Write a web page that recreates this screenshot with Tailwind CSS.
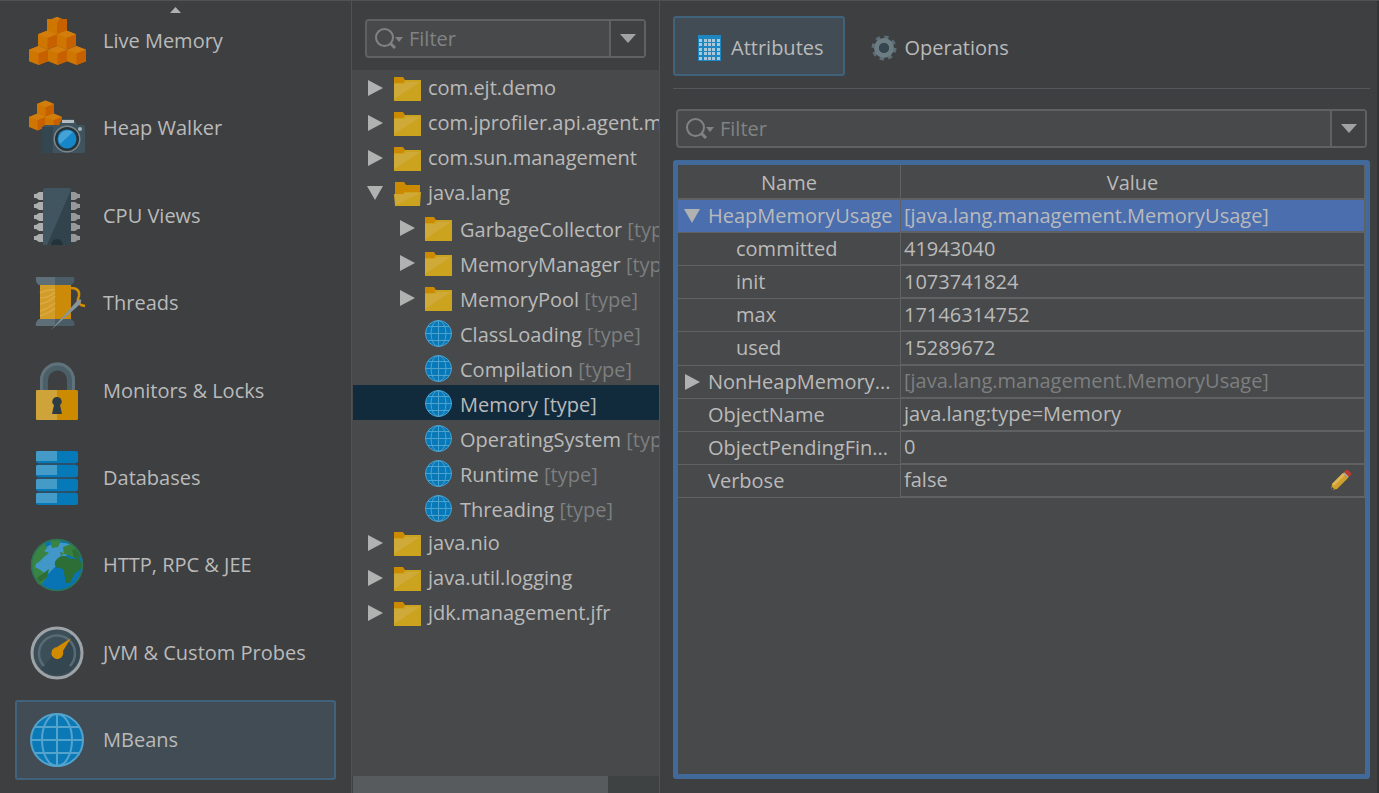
<!DOCTYPE html>
<html lang="en">
<head>
<meta charset="utf-8">
<title>MBeans</title>
<script src="https://cdn.jsdelivr.net/npm/@tailwindcss/browser@4"></script>
</head>
<body class="bg-[#3d3f41] text-[#bababa] font-['Open_Sans','Noto_Sans',sans-serif] text-xl leading-7">

<svg class="hidden" aria-hidden="true">
  <defs>
    <symbol id="cube" viewBox="0 0 20 20">
      <path fill="#cf7600" d="M10 0 20 4v12l-10 4L0 16V4z"/>
      <path fill="#d27d0c" d="M10 0 20 4 10 8 0 4z"/>
      <path fill="#c76100" d="M10 8 20 4v12l-10 4z"/>
    </symbol>
    <symbol id="folder" viewBox="0 0 27 24">
      <path fill="#cc8a00" d="M0 0h9l2 3v4H0z"/>
      <path fill="#cca31f" d="M0 6h9l2-3h16v21H0z"/>
      <path fill="#d0ad45" opacity=".7" d="M0 7h10l2-2h14L0 22z"/>
    </symbol>
    <symbol id="folder-open" viewBox="0 0 27 24">
      <path fill="#cc8a00" d="M1 0h9l2 3h14v11H1z"/>
      <path fill="#cca31f" d="M0 12h9l2-2h16l-1 14H1z"/>
      <path fill="#d0ad45" opacity=".7" d="M0 12h9l2-1h15L2 23z"/>
    </symbol>
    <symbol id="globe" viewBox="0 0 54 54">
      <circle cx="27" cy="27" r="26" fill="#0c79b7"/>
      <g fill="none" stroke="#53a3cd" stroke-width="2"><circle cx="27" cy="27" r="26"/><ellipse cx="27" cy="27" rx="15" ry="26"/><path d="M27 1v52M1 27h52M5 14h44M5 40h44"/></g>
    </symbol>
    <symbol id="globe-small" viewBox="0 0 27 27">
      <circle cx="13.500" cy="13.500" r="13" fill="#0779b9"/>
      <g fill="none" stroke="#4ba2cf" stroke-width="1"><circle cx="13.500" cy="13.500" r="13"/><ellipse cx="13.500" cy="13.500" rx="7.500" ry="13"/><path d="M13.500 0v27M0 13.500h27M3 6.500h21M3 20.500h21"/></g>
    </symbol>
    <symbol id="search" viewBox="0 0 28 22">
      <circle cx="9.500" cy="9.500" r="8.500" fill="none" stroke="#808384" stroke-width="2"/>
      <path stroke="#808384" stroke-width="3" d="m15 15 5 5"/>
      <path fill="#808384" d="M20 9h8l-4 5z"/>
    </symbol>
    <symbol id="right" viewBox="0 0 15 16"><path fill="#b0b1b1" d="M0 0v16l15-8z"/></symbol>
    <symbol id="down" viewBox="0 0 16 14"><path fill="#b0b1b1" d="M0 0h16L8 14z"/></symbol>
  </defs>
</svg>

<div class="flex h-screen overflow-hidden border-t border-[#505254]">

  <nav aria-label="Views" class="relative flex w-[352px] shrink-0 flex-col justify-between border-r border-[#505254] px-[15px] pb-[13px]">
    <button aria-label="Scroll up" class="absolute top-1.5 left-[170px] h-[6px] w-[11px]"><svg class="block h-full w-full" viewBox="0 0 11 6"><path fill="#b0b1b1" d="M0 6h11L5.500 0z"/></svg></button>

    <a href="#" class="flex h-20 items-center gap-4 px-[14px]">
      <svg class="h-14 w-[58px]" viewBox="0 0 58 56">
        <use href="#cube" x="18" y="4" width="20" height="20"/>
        <path fill="#cf7600" d="M18 6h10v9H18z"/><path fill="#c76100" d="m28 10 2-4h8v9H28z"/>
        <use href="#cube" x="9" y="17" width="19" height="20"/><use href="#cube" x="28" y="17" width="19" height="20"/>
        <use href="#cube" x="0" y="33" width="19" height="19"/><use href="#cube" x="19" y="33" width="19" height="19"/><use href="#cube" x="38" y="33" width="19" height="19"/>
      </svg>
      <span>Live Memory</span>
    </a>
    <a href="#" class="flex h-20 items-center gap-4 px-[14px]">
      <svg class="h-14 w-[58px]" viewBox="0 0 58 56">
        <use href="#cube" x="8" y="0" width="17" height="18"/><use href="#cube" x="0" y="13" width="17" height="18"/><use href="#cube" x="16" y="13" width="17" height="18"/>
        <path fill="#3e535e" d="M16 25h14l3-6h12l3 6h6q2 0 2 2v24q0 2-2 2H15q-2 0-2-2V27z"/>
        <path fill="#344751" d="M13 27h11v26H13z"/>
        <path fill="#b5bdc0" d="M33 20h12v3H33z"/><circle cx="51" cy="29" r="2" fill="#a9b2b5"/>
        <circle cx="38" cy="39" r="13.500" fill="#7c878c"/><circle cx="38" cy="39" r="12" fill="#27333a"/><circle cx="38" cy="39" r="9.500" fill="#1586c8"/><path fill="#45a2d6" d="M31 44a9 9 0 0 1 13-12z"/>
      </svg>
      <span>Heap Walker</span>
    </a>
    <a href="#" class="flex h-20 items-center gap-4 px-[14px]">
      <svg class="h-[58px] w-[58px]" viewBox="0 0 58 58">
        <g fill="#acafb0"><path id="pins" d="M14 5h-4l-3 2H5v4h2l3 2h4zM14 15h-4l-3 2H5v4h2l3 2h4zM14 26h-4l-3 2H5v4h2l3 2h4zM14 36h-4l-3 2H5v4h2l3 2h4zM14 47h-4l-3 2H5v4h2l3 2h4z"/><use href="#pins" transform="matrix(-1 0 0 1 56 0)" opacity=".8"/></g>
        <rect x="14" y="1" width="28" height="57" rx="2" fill="#31434d"/><path fill="#40555f" d="M16 1h24q2 0 2 2L18 58h-4V3q0-2 2-2z"/>
        <path fill="#24323a" d="M22 58a6 6 0 0 1 12 0z"/>
      </svg>
      <span>CPU Views</span>
    </a>
    <a href="#" class="flex h-20 items-center gap-4 px-[14px]">
      <svg class="h-[56px] w-[58px]" viewBox="0 0 58 56">
        <path fill="#4a5c65" d="M7 2h38q2 5-3 8H10Q6 7 7 2zM10 44h32q5 3 3 7H7q-1-4 3-7z"/>
        <path fill="#5f6f77" d="M7 2h19v8H10Q6 7 7 2zM10 44h16v7H7q-1-4 3-7z"/>
        <path fill="#cb8a08" d="M11 10h31v34H11z"/><path fill="#d29c28" d="M11 10h15v34H11z"/>
        <path fill="none" stroke="#dda943" stroke-width="1.500" d="M11 18q8-4 15-3M11 23q9 0 15-6M11 29q10-2 15-8M11 36q9-3 15-8M11 41q9-3 15-8"/>
        <path fill="none" stroke="#d18e00" stroke-width="2.500" d="M42 13q9 0 8 8-3 6 2 9l4 1"/>
        <path fill="#87959b" d="m22 55 25-28q4-4 5-2 1 2-3 6z"/>
      </svg>
      <span>Threads</span>
    </a>
    <a href="#" class="flex h-20 items-center gap-4 px-[14px]">
      <svg class="h-[58px] w-[58px]" viewBox="0 0 58 58">
        <path fill="none" stroke="#4b5f69" stroke-width="8" d="M15 29V18a13.500 13.500 0 0 1 27 0v11"/><path fill="none" stroke="#61727a" stroke-width="3" d="M12.500 29V18a16 16 0 0 1 32 0v11"/>
        <rect x="7" y="28" width="42" height="30" rx="1.500" fill="#cb8a00"/><path fill="#cda33a" d="M8 28h20v30H8l-1-1V29z"/>
        <path fill="#2d3c44" d="M28 35a4.500 4.500 0 0 1 3 8l2 9H23l2-9a4.500 4.500 0 0 1 3-8z"/>
      </svg>
      <span>Monitors &amp; Locks</span>
    </a>
    <a href="#" class="flex h-20 items-center gap-4 px-[14px]">
      <svg class="h-[54px] w-[58px]" viewBox="0 0 58 54">
        <path fill="#29516a" d="M9 10h38v36H9z"/>
        <g fill="#067ab9"><rect x="7" y="0" width="42" height="12" rx="2"/><rect x="7" y="14" width="42" height="12" rx="2"/><rect x="7" y="28" width="42" height="12" rx="2"/><rect x="7" y="42" width="42" height="12" rx="2"/></g>
        <path fill="#459bc7" d="M8 0h20v10H7V1zM8 14h20v10H7v-9zM8 28h20v10H7v-9zM8 42h20v10H7v-9z"/>
      </svg>
      <span>Databases</span>
    </a>
    <a href="#" class="flex h-20 items-center gap-4 px-[14px]">
      <svg class="h-[54px] w-[58px]" viewBox="0 0 58 54">
        <circle cx="28" cy="27" r="26" fill="#0874b3"/><path fill="#4198c8" d="M10 45A26 26 0 0 1 46 9z"/>
        <path fill="#398344" d="M3 20Q7 9 16 5l2 5-3 3 5 2-5 4-4 4-4 3-1 3 7 4 5 6-6 8-3-1Q3 37 3 28zM21 2q8-2 11 1l-3 6-6 1z"/>
        <path fill="#39803f" d="m34 9 8-3q7 5 9 12l-5 2-7-3-4-1zM31 14l4 1-3 3z"/>
        <path fill="#2d6d36" d="M28 21q4-4 8-3l6 3 8-1q4 8 1 12l-5 3-5 10h-4l-2-10-1-4-7-2q-3-4 1-8z"/>
        <path fill="#2d6d36" d="m43 12 4-1 5 8-7 1zM20 31l-2 8-7 5-3-4z"/>
        <circle cx="28" cy="27" r="25.500" fill="none" stroke="#2d7450" stroke-width="1.500"/>
      </svg>
      <span>HTTP, RPC &amp; JEE</span>
    </a>
    <a href="#" class="flex h-20 items-center gap-4 px-[14px]">
      <svg class="h-[54px] w-[58px]" viewBox="0 0 58 54">
        <circle cx="28" cy="27" r="25" fill="#3c4f59" stroke="#9da3a6" stroke-width="3"/><path fill="#344650" d="M12 43 43 9a23 23 0 0 1-31 34z"/>
        <path fill="none" stroke="#586a73" stroke-width="2.500" d="M15 40a18 18 0 1 1 26 0"/>
        <path fill="#d18b00" d="m42 12-8 13a6 6 0 1 1-6-4z"/>
      </svg>
      <span>JVM &amp; Custom Probes</span>
    </a>
    <a href="#" aria-current="page" class="flex h-20 items-center gap-4 rounded-[3px] border-2 border-[#41627b] bg-[#414c54] px-3">
      <svg class="h-[54px] w-[58px]" viewBox="0 0 58 54"><use href="#globe" x="1" width="54" height="54"/></svg>
      <span>MBeans</span>
    </a>
  </nav>

  <section aria-label="MBean tree" class="flex w-[308px] shrink-0 flex-col border-r border-[#505254]">
    <div class="px-[13px] pt-[18px] pb-3">
      <div class="flex h-[39px] rounded border-2 border-[#5f6162] bg-[#48494a]">
        <label for="tree-filter" class="flex items-center pl-2"><svg class="h-[22px] w-7"><use href="#search"/></svg><span class="sr-only">Filter tree</span></label>
        <input id="tree-filter" type="text" placeholder="Filter" class="min-w-0 flex-1 bg-transparent px-[6px] outline-none placeholder:text-[#808384]">
        <button aria-label="Filter history" class="flex w-[35px] items-center justify-center border-l-2 border-[#5f6162] bg-[#3f4143]"><svg class="h-[9px] w-4" viewBox="0 0 16 9"><path fill="#a0a2a3" d="M0 0h16L8 9z"/></svg></button>
      </div>
    </div>
    <ul role="tree" class="flex-1 overflow-hidden bg-[#48494a] pl-px whitespace-nowrap">
      <li role="treeitem" class="flex h-[35px] items-center pl-[15px]"><svg class="mr-[11px] h-4 w-[15px] shrink-0"><use href="#right"/></svg><svg class="mt-0.5 mr-[7px] h-6 w-[27px] shrink-0"><use href="#folder"/></svg><span>com.ejt.demo</span></li>
      <li role="treeitem" class="flex h-[35px] items-center pl-[15px]"><svg class="mr-[11px] h-4 w-[15px] shrink-0"><use href="#right"/></svg><svg class="mt-0.5 mr-[7px] h-6 w-[27px] shrink-0"><use href="#folder"/></svg><span>com.jprofiler.api.agent.m</span></li>
      <li role="treeitem" class="flex h-[35px] items-center pl-[15px]"><svg class="mr-[11px] h-4 w-[15px] shrink-0"><use href="#right"/></svg><svg class="mt-0.5 mr-[7px] h-6 w-[27px] shrink-0"><use href="#folder"/></svg><span>com.sun.management</span></li>
      <li role="treeitem" aria-expanded="true">
        <div class="flex h-[35px] items-center pl-[14px]"><svg class="mr-[11px] h-[14px] w-4 shrink-0"><use href="#down"/></svg><svg class="mt-0.5 mr-[7px] h-6 w-[27px] shrink-0"><use href="#folder-open"/></svg><span>java.lang</span></div>
        <ul role="group">
          <li role="treeitem" class="flex h-[35px] items-center pl-[47px]"><svg class="mr-[10px] h-4 w-[15px] shrink-0"><use href="#right"/></svg><svg class="mt-0.5 mr-2 h-6 w-[27px] shrink-0"><use href="#folder"/></svg><span class="pt-1">GarbageCollector <span class="text-[#7d7f80]">[type]</span></span></li>
          <li role="treeitem" class="flex h-[35px] items-center pl-[47px]"><svg class="mr-[10px] h-4 w-[15px] shrink-0"><use href="#right"/></svg><svg class="mt-0.5 mr-2 h-6 w-[27px] shrink-0"><use href="#folder"/></svg><span class="pt-1">MemoryManager <span class="text-[#7d7f80]">[type]</span></span></li>
          <li role="treeitem" class="flex h-[35px] items-center pl-[47px]"><svg class="mr-[10px] h-4 w-[15px] shrink-0"><use href="#right"/></svg><svg class="mt-0.5 mr-2 h-6 w-[27px] shrink-0"><use href="#folder"/></svg><span class="pt-1">MemoryPool <span class="text-[#7d7f80]">[type]</span></span></li>
          <li role="treeitem" class="flex h-[35px] items-center pl-[72px]"><svg class="mt-0.5 mr-2 h-[27px] w-[27px] shrink-0"><use href="#globe-small"/></svg><span class="pt-1">ClassLoading <span class="text-[#7d7f80]">[type]</span></span></li>
          <li role="treeitem" class="flex h-[35px] items-center pl-[72px]"><svg class="mt-0.5 mr-2 h-[27px] w-[27px] shrink-0"><use href="#globe-small"/></svg><span class="pt-1">Compilation <span class="text-[#7d7f80]">[type]</span></span></li>
          <li role="treeitem" aria-selected="true" class="flex h-[35px] items-center bg-[#112a3c] pl-[72px]"><svg class="mt-0.5 mr-2 h-[27px] w-[27px] shrink-0"><use href="#globe-small"/></svg><span class="pt-1">Memory [type]</span></li>
          <li role="treeitem" class="flex h-[35px] items-center pl-[72px]"><svg class="mt-0.5 mr-2 h-[27px] w-[27px] shrink-0"><use href="#globe-small"/></svg><span class="pt-1">OperatingSystem <span class="text-[#7d7f80]">[type]</span></span></li>
          <li role="treeitem" class="flex h-[35px] items-center pl-[72px]"><svg class="mt-0.5 mr-2 h-[27px] w-[27px] shrink-0"><use href="#globe-small"/></svg><span class="pt-1">Runtime <span class="text-[#7d7f80]">[type]</span></span></li>
          <li role="treeitem" class="flex h-[35px] items-center pl-[72px]"><svg class="mt-0.5 mr-2 h-[27px] w-[27px] shrink-0"><use href="#globe-small"/></svg><span class="pt-1">Threading <span class="text-[#7d7f80]">[type]</span></span></li>
        </ul>
      </li>
      <li role="treeitem" class="flex h-[35px] items-center pl-[15px]"><svg class="mr-[11px] h-4 w-[15px] shrink-0"><use href="#right"/></svg><svg class="mt-0.5 mr-[7px] h-6 w-[27px] shrink-0"><use href="#folder"/></svg><span>java.nio</span></li>
      <li role="treeitem" class="flex h-[35px] items-center pl-[15px]"><svg class="mr-[11px] h-4 w-[15px] shrink-0"><use href="#right"/></svg><svg class="mt-0.5 mr-[7px] h-6 w-[27px] shrink-0"><use href="#folder"/></svg><span>java.util.logging</span></li>
      <li role="treeitem" class="flex h-[35px] items-center pl-[15px]"><svg class="mr-[11px] h-4 w-[15px] shrink-0"><use href="#right"/></svg><svg class="mt-0.5 mr-[7px] h-6 w-[27px] shrink-0"><use href="#folder"/></svg><span>jdk.management.jfr</span></li>
    </ul>
    <div class="h-[17px] bg-[#3e4242] pl-px"><div class="h-full w-5/6 bg-[#575b5d]"></div></div>
  </section>

  <main class="flex min-w-0 flex-1 flex-col border-r-2 border-[#323435] pr-[7px] pb-[14px] pl-[13px]">
    <div role="tablist" class="flex border-b border-[#55585a] pt-[15px] pb-3">
      <button role="tab" aria-selected="true" class="flex h-[60px] items-center rounded-[3px] border-2 border-[#41627b] bg-[#414c54] pt-[3px] pr-[19px] pl-[23px]">
        <svg class="mr-[10px] h-[26px] w-[23px]" viewBox="0 0 23 26"><path fill="#1e86c1" d="M0 0h23v26H0z"/><g fill="#a9c9db"><path id="cells" d="M1 4h3v3H1zM6 4h3v3H6zM10 4h3v3h-3zM14 4h3v3h-3zM19 4h3v3h-3zM1 8h3v3H1zM6 8h3v3H6zM10 8h3v3h-3zM14 8h3v3h-3zM19 8h3v3h-3z"/><use href="#cells" y="9"/><path d="M1 22h3v3H1zM6 22h3v3H6zM10 22h3v3h-3zM14 22h3v3h-3zM19 22h3v3h-3z"/></g></svg>
        <span>Attributes</span>
      </button>
      <button role="tab" class="flex h-[60px] items-center pt-[3px] pl-[26px]">
        <svg class="mr-2 h-[26px] w-[26px]" viewBox="0 0 26 26"><circle cx="13" cy="13" r="11" fill="none" stroke="#5e6e76" stroke-width="3" stroke-dasharray="4.300 4.340"/><circle cx="13" cy="13" r="7.500" fill="none" stroke="#6c7c83" stroke-width="5"/><circle cx="13" cy="13" r="5" fill="#354650"/></svg>
        <span>Operations</span>
      </button>
    </div>
    <div class="pt-5 pr-[3px] pb-3 pl-[3px]">
      <div class="flex h-[39px] rounded border-2 border-[#5f6162] bg-[#48494a]">
        <label for="attribute-filter" class="flex items-center pl-2"><svg class="h-[22px] w-7"><use href="#search"/></svg><span class="sr-only">Filter attributes</span></label>
        <input id="attribute-filter" type="text" placeholder="Filter" class="min-w-0 flex-1 bg-transparent px-[6px] outline-none placeholder:text-[#808384]">
        <button aria-label="Filter history" class="flex w-[35px] items-center justify-center border-l-2 border-[#5f6162] bg-[#3f4143]"><svg class="h-[9px] w-4" viewBox="0 0 16 9"><path fill="#a0a2a3" d="M0 0h16L8 9z"/></svg></button>
      </div>
    </div>
    <div class="flex-1 rounded-[3px] border-[5px] border-[#41699a] bg-[#48494a]">
      <table class="h-[333px] w-full table-fixed border-separate border-spacing-0 whitespace-nowrap">
        <colgroup><col class="w-[223px]"><col></colgroup>
        <thead>
          <tr class="h-[35px]"><th class="border-r border-b-2 border-[#5f6162] p-0 pt-0.5 font-normal">Name</th><th class="border-r border-b-2 border-[#5f6162] p-0 pt-0.5 font-normal">Value</th></tr>
        </thead>
        <tbody>
          <tr class="bg-[#4b6eaf]"><td class="border-r border-b border-[#5f6162] p-0 pl-[6px]"><span class="flex items-center gap-2"><svg class="h-[14px] w-4 shrink-0"><use href="#down"/></svg>HeapMemoryUsage</span></td><td class="border-r border-b-2 border-[#5f6162] p-0 pl-[3px]">[java.lang.management.MemoryUsage]</td></tr>
          <tr><td class="border-r border-b border-[#5f6162] p-0 pl-[58px]">committed</td><td class="border-r border-b-2 border-[#5f6162] p-0 pl-[3px]">41943040</td></tr>
          <tr><td class="border-r border-b border-[#5f6162] p-0 pl-[58px]">init</td><td class="border-r border-b-2 border-[#5f6162] p-0 pl-[3px]">1073741824</td></tr>
          <tr><td class="border-r border-b border-[#5f6162] p-0 pl-[58px]">max</td><td class="border-r border-b-2 border-[#5f6162] p-0 pl-[3px]">17146314752</td></tr>
          <tr><td class="border-r border-b border-[#5f6162] p-0 pl-[58px]">used</td><td class="border-r border-b-2 border-[#5f6162] p-0 pl-[3px]">15289672</td></tr>
          <tr><td class="border-r border-b border-[#5f6162] p-0 pl-[7px]"><span class="flex items-center gap-2"><svg class="h-4 w-[15px] shrink-0"><use href="#right"/></svg>NonHeapMemory...</span></td><td class="border-r border-b-2 border-[#5f6162] p-0 pl-[3px] text-[#7d7f80]">[java.lang.management.MemoryUsage]</td></tr>
          <tr><td class="border-r border-b border-[#5f6162] p-0 pl-[30px]">ObjectName</td><td class="border-r border-b-2 border-[#5f6162] p-0 pl-[3px]">java.lang:type=Memory</td></tr>
          <tr><td class="border-r border-b border-[#5f6162] p-0 pl-[30px]">ObjectPendingFin...</td><td class="border-r border-b-2 border-[#5f6162] p-0 pl-[3px]">0</td></tr>
          <tr><td class="border-r border-b border-[#5f6162] p-0 pl-[30px]">Verbose</td><td class="border-r border-b-2 border-[#5f6162] p-0 pr-3 pl-[3px]"><span class="flex items-center justify-between">false<button aria-label="Edit value"><svg class="block h-[22px] w-[22px]" viewBox="0 0 22 22"><path fill="#d0a02c" d="M13 4 18 9 7 20l-6 1 1-6z"/><path fill="#dfb659" d="m13 4 2 2L4 17l-2-2z"/><path fill="#adb1b2" d="m13 4 2-1 4 4-1 2z"/><path fill="#b83a2b" d="m14 3 2-2q1-1 2 0l3 3q1 1 0 2l-2 2z"/><path fill="#2c3a42" d="m1 21 1-3 2 2z"/></svg></button></span></td></tr>
        </tbody>
      </table>
    </div>
  </main>
</div>
</body>
</html>
